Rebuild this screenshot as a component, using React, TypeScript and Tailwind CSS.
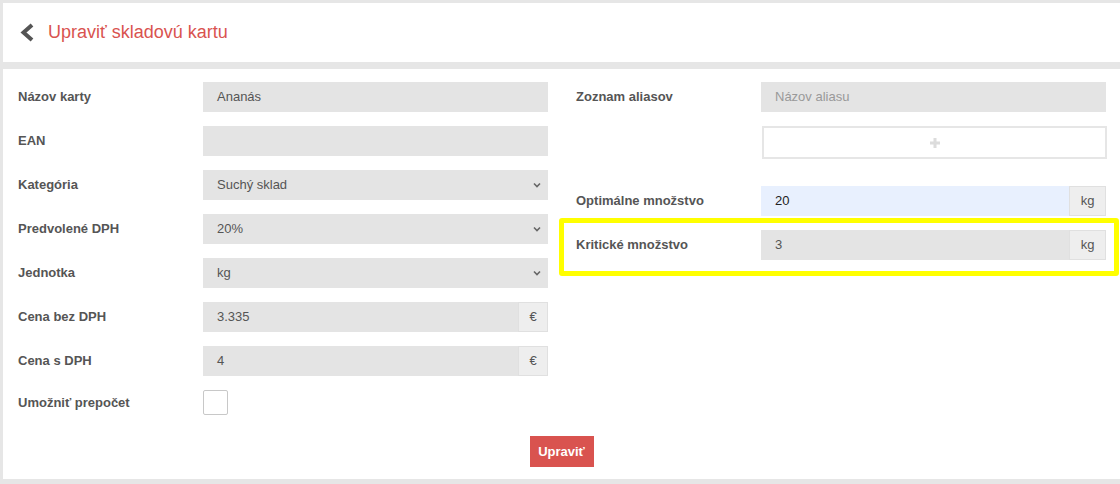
import React from "react";

const font = { fontFamily: '"Liberation Sans", Arial, sans-serif' };

function Label({ children }: { children: React.ReactNode }) {
  return (
    <div className="w-[185px] shrink-0 text-[13px] font-bold text-[#555]">{children}</div>
  );
}

function Field({ value, placeholder }: { value?: string; placeholder?: string }) {
  return (
    <div className="flex h-[30px] w-[345px] items-center bg-[#e4e4e4] pl-[14px] text-[13px]">
      {value ? <span className="text-[#555]">{value}</span> : <span className="text-[#999]">{placeholder}</span>}
    </div>
  );
}

function SelectField({ value }: { value: string }) {
  return (
    <div className="flex h-[30px] w-[345px] items-center justify-between bg-[#e4e4e4] pl-[14px] pr-[6px] text-[13px] text-[#555]">
      <span>{value}</span>
      <svg width="10" height="8" viewBox="0 0 10 8">
        <polyline points="2,2.5 5,5.5 8,2.5" fill="none" stroke="#666" strokeWidth="1.6" />
      </svg>
    </div>
  );
}

function AddonField({ value, addon, addonW, bg = "bg-[#e4e4e4]", text = "text-[#555]" }: { value: string; addon: string; addonW: string; bg?: string; text?: string }) {
  return (
    <div className="flex h-[30px] w-[345px] text-[13px]">
      <div className={`flex flex-1 items-center pl-[14px] ${bg} ${text}`}>{value}</div>
      <div className={`flex ${addonW} items-center justify-center border border-[#e0e0e0] bg-[#eeeeee] text-[#555]`}>{addon}</div>
    </div>
  );
}

function Row({ label, children }: { label: string; children: React.ReactNode }) {
  return (
    <div className="flex items-center">
      <Label>{label}</Label>
      {children}
    </div>
  );
}

export default function App() {
  return (
    <div className="relative h-[484px] w-[1120px] overflow-hidden bg-[#e6e6e6] pl-[3px] pt-[3px]" style={font}>
      <div className="flex h-[59px] items-center bg-white pl-[17px]">
        <svg width="14" height="19" viewBox="0 0 14 19">
          <polyline points="12,2 3.5,9.5 12,17" fill="none" stroke="#555" strokeWidth="4" strokeLinejoin="miter" />
        </svg>
        <span className="ml-[14px] text-[18px] text-[#d9534f]">Upraviť skladovú kartu</span>
      </div>
      <div className="mt-[7px] h-[410px] bg-white px-[15px] pt-[13px]">
        <div className="flex">
          <div className="flex w-[530px] flex-col gap-[14px]">
            <Row label="Názov karty"><Field value="Ananás" /></Row>
            <Row label="EAN"><Field /></Row>
            <Row label="Kategória"><SelectField value="Suchý sklad" /></Row>
            <Row label="Predvolené DPH"><SelectField value="20%" /></Row>
            <Row label="Jednotka"><SelectField value="kg" /></Row>
            <Row label="Cena bez DPH"><AddonField value="3.335" addon="€" addonW="w-[30px]" /></Row>
            <Row label="Cena s DPH"><AddonField value="4" addon="€" addonW="w-[30px]" /></Row>
            <div className="flex items-center">
              <Label>Umožniť prepočet</Label>
              <div className="h-[25px] w-[25px] rounded-[2px] border border-[#c8c8c8] bg-white" />
            </div>
          </div>
          <div className="ml-[28px] flex w-[531px] flex-col">
            <Row label="Zoznam aliasov"><Field placeholder="Názov aliasu" /></Row>
            <div className="ml-[186px] mt-[14px] flex h-[33px] w-[345px] items-center justify-center border-2 border-[#e6e6e6] bg-white">
              <svg width="12" height="12" viewBox="0 0 12 12">
                <path d="M6 1v10M1 6h10" stroke="#dcdcdc" strokeWidth="3" />
              </svg>
            </div>
            <div className="mt-[27px]">
              <Row label="Optimálne množstvo"><AddonField value="20" addon="kg" addonW="w-[37px]" bg="bg-[#e8f0fe]" text="text-[#222]" /></Row>
            </div>
            <div className="mt-[14px]">
              <Row label="Kritické množstvo"><AddonField value="3" addon="kg" addonW="w-[37px]" /></Row>
            </div>
          </div>
        </div>
        <div className="mt-[21px] flex justify-center">
          <div className="flex h-[31px] w-[64px] items-center justify-center bg-[#d9534f] text-[13px] font-bold text-white">Upraviť</div>
        </div>
      </div>
      <div className="pointer-events-none absolute left-[559px] top-[218px] h-[58px] w-[560px] rounded-[3px] border-[5px] border-[#ffff00]" />
    </div>
  );
}
